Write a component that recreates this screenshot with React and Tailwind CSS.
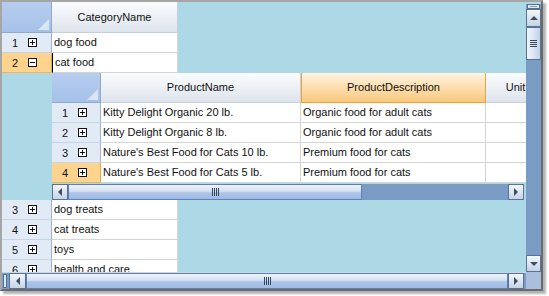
import React from "react";

const font = "font-['Liberation_Sans',Arial,sans-serif]";

function PlusBox({ minus }) {
  return (
    <svg width="9" height="9" viewBox="0 0 9 9" className="shrink-0 block">
      <rect x="0.5" y="0.5" width="8" height="8" fill="#fff" stroke="#111" />
      <line x1="2" y1="4.5" x2="7" y2="4.5" stroke="#111" />
      {!minus && <line x1="4.5" y1="2" x2="4.5" y2="7" stroke="#111" />}
    </svg>
  );
}

function Arrow({ dir }) {
  const pts = {
    left: "5,0 5,8 1,4",
    right: "1,0 1,8 5,4",
    up: "0,5 8,5 4,1",
    down: "0,1 8,1 4,5",
  }[dir];
  const vert = dir === "up" || dir === "down";
  return (
    <svg width={vert ? 8 : 6} height={vert ? 6 : 8} viewBox={vert ? "0 0 8 6" : "0 0 6 8"} className="block">
      <polygon points={pts} fill="#3f4d63" />
    </svg>
  );
}

function ScrollBtn({ dir, cls = "w-[16px] h-[16px]" }) {
  return (
    <div className={`${cls} shrink-0 flex items-center justify-center border border-[#5b7297] bg-gradient-to-b from-[#f4f7fb] to-[#c6d3e6]`}>
      <Arrow dir={dir} />
    </div>
  );
}

function HThumb({ cls }) {
  return (
    <div className={`${cls} h-full flex items-center justify-center border border-[#5d80b8] bg-[linear-gradient(to_bottom,#eef3fb_0%,#d3e0f3_45%,#aec5e9_55%,#a2bbe4_100%)]`}>
      <div className="flex gap-[1px]">
        <div className="w-[1px] h-[8px] bg-[#34445c]" />
        <div className="w-[1px] h-[8px] bg-[#34445c]" />
        <div className="w-[1px] h-[8px] bg-[#34445c]" />
        <div className="w-[1px] h-[8px] bg-[#34445c]" />
      </div>
    </div>
  );
}

function Corner({ w }) {
  return (
    <div className={`${w} h-full shrink-0 flex items-end justify-end pr-[2px] pb-[2px] border-r border-b border-[#8fa9cc] bg-gradient-to-b from-[#b6cdee] to-[#a6c1e8]`}>
      <svg width="11" height="11" viewBox="0 0 11 11" className="block">
        <polygon points="11,0 11,11 0,11" fill="#dbe6f5" />
      </svg>
    </div>
  );
}

function ColHead({ w, hot, children }) {
  const look = hot
    ? "border-x border-b border-[#f0a23e] bg-gradient-to-b from-[#fff4df] to-[#f8c87c]"
    : "border-r border-b border-[#c6d0dd] bg-gradient-to-b from-[#fbfcfd] to-[#dee4ed]";
  return (
    <div className={`${w} h-full shrink-0 flex items-center justify-center whitespace-nowrap overflow-hidden ${look}`}>
      {children}
    </div>
  );
}

function RowHead({ n, minus, selected, w = "w-[50px]" }) {
  const look = selected
    ? "bg-[#fdd48e] border-b-[#f2b25a] border-r-[#e9a54a]"
    : "bg-[#e2eaf6] border-b-[#c8d5e8] border-r-[#9cb3cf]";
  return (
    <div className={`${w} h-full shrink-0 flex items-center border-r border-b ${look}`}>
      <span className="w-[10px] ml-[6px] text-right leading-[14px]">{n}</span>
      <span className="ml-[10px]">
        <PlusBox minus={minus} />
      </span>
    </div>
  );
}

function Cell({ w, current, children }) {
  return (
    <div
      className={`${w} h-full shrink-0 flex items-center pb-[1px] pl-[2px] bg-white border-r border-b border-[#d5d5d5] whitespace-nowrap overflow-hidden leading-[14px] ${
        current ? "border-l border-l-black pl-[1px]" : ""
      }`}
    >
      {children}
    </div>
  );
}

const categories = [
  { n: 1, name: "dog food" },
  { n: 2, name: "cat food", open: true },
  { n: 3, name: "dog treats" },
  { n: 4, name: "cat treats" },
  { n: 5, name: "toys" },
  { n: 6, name: "health and care" },
];

const products = [
  { n: 1, name: "Kitty Delight Organic 20 lb.", desc: "Organic food for adult cats" },
  { n: 2, name: "Kitty Delight Organic 8 lb.", desc: "Organic food for adult cats" },
  { n: 3, name: "Nature's Best Food for Cats 10 lb.", desc: "Premium food for cats" },
  { n: 4, name: "Nature's Best Food for Cats 5 lb.", desc: "Premium food for cats", sel: true },
];

function MainRow({ c }) {
  return (
    <div className="flex h-[20px] shrink-0">
      <RowHead n={c.n} minus={c.open} selected={c.open} />
      <Cell w="w-[126px]" current={c.open}>
        {c.name}
      </Cell>
    </div>
  );
}

function ChildGrid() {
  return (
    <div className="flex h-[127px] shrink-0">
      <div className="w-[50px] shrink-0" />
      <div className="w-[474px] shrink-0 flex flex-col overflow-hidden">
        <div className="flex h-[30px] shrink-0">
          <Corner w="w-[49px]" />
          <ColHead w="w-[200px]">ProductName</ColHead>
          <ColHead w="w-[185px]" hot>
            ProductDescription
          </ColHead>
          <ColHead w="w-[60px]">Unit</ColHead>
        </div>
        {products.map((p) => (
          <div key={p.n} className="flex h-[20px] shrink-0">
            <RowHead n={p.n} selected={p.sel} w="w-[49px]" />
            <Cell w="w-[200px]">{p.name}</Cell>
            <Cell w="w-[185px]">{p.desc}</Cell>
            <Cell w="w-[60px]" />
          </div>
        ))}
        <div className="w-[472px] h-[17px] shrink-0 pt-[1px] flex">
          <div className="flex w-full h-[16px] bg-[#7a9bc3]">
            <ScrollBtn dir="left" />
            <HThumb cls="w-[294px]" />
            <div className="flex-1" />
            <ScrollBtn dir="right" />
          </div>
        </div>
      </div>
    </div>
  );
}

function VScroll() {
  return (
    <div className="w-[15px] h-full shrink-0 flex flex-col bg-[#7a9bc3]">
      <div className="h-[2px] bg-[#add8e6]" />
      <div className="h-[5px] mx-[1px] border border-[#56708f] bg-[#dde6f3] flex items-center justify-center">
        <div className="w-[7px] h-[1px] bg-[#8aa0bd]" />
      </div>
      <ScrollBtn dir="up" cls="w-[15px] h-[18px]" />
      <div className="h-[33px] shrink-0 flex flex-col items-center justify-center gap-[1px] border border-[#5b7297] bg-[linear-gradient(to_right,#f1f5fb_0%,#dce6f4_50%,#c3d2e8_100%)]">
        <div className="w-[7px] h-[1px] bg-[#3b4860]" />
        <div className="w-[7px] h-[1px] bg-[#3b4860]" />
        <div className="w-[7px] h-[1px] bg-[#3b4860]" />
        <div className="w-[7px] h-[1px] bg-[#3b4860]" />
      </div>
      <div className="flex-1" />
      <ScrollBtn dir="down" cls="w-[15px] h-[17px]" />
    </div>
  );
}

function MainHScroll() {
  return (
    <div className="w-[524px] h-full flex items-center pl-[1px] pr-[2px] bg-[#7a9bc3] border-t border-[#c9d6e8]">
      <div className="w-[4px] h-[14px] mr-[2px] border border-[#56708f] bg-[#dde6f3]" />
      <ScrollBtn dir="left" cls="w-[17px] h-[16px]" />
      <HThumb cls="flex-1" />
      <ScrollBtn dir="right" />
    </div>
  );
}

export default function App() {
  return (
    <div className={`w-[549px] h-[296px] bg-white ${font} text-[11px] text-[#111]`}>
      <div className="w-[543px] h-[291px] flex flex-col border-2 border-t-[#a6a6a6] border-l-[#a6a6a6] border-r-[#6b6b6b] border-b-[#6b6b6b] shadow-[3px_3px_2px_rgba(0,0,0,0.3)]">
        <div className="flex h-[270px] shrink-0">
          <div className="w-[524px] h-full shrink-0 overflow-hidden bg-[#add8e6] flex flex-col">
            <div className="flex h-[31px] shrink-0">
              <Corner w="w-[50px]" />
              <ColHead w="w-[126px]">CategoryName</ColHead>
            </div>
            <MainRow c={categories[0]} />
            <MainRow c={categories[1]} />
            <ChildGrid />
            {categories.slice(2).map((c) => (
              <MainRow key={c.n} c={c} />
            ))}
          </div>
          <VScroll />
        </div>
        <div className="flex h-[17px] shrink-0">
          <MainHScroll />
          <div className="w-[15px] h-full bg-[#a9bfdd]" />
        </div>
      </div>
    </div>
  );
}
